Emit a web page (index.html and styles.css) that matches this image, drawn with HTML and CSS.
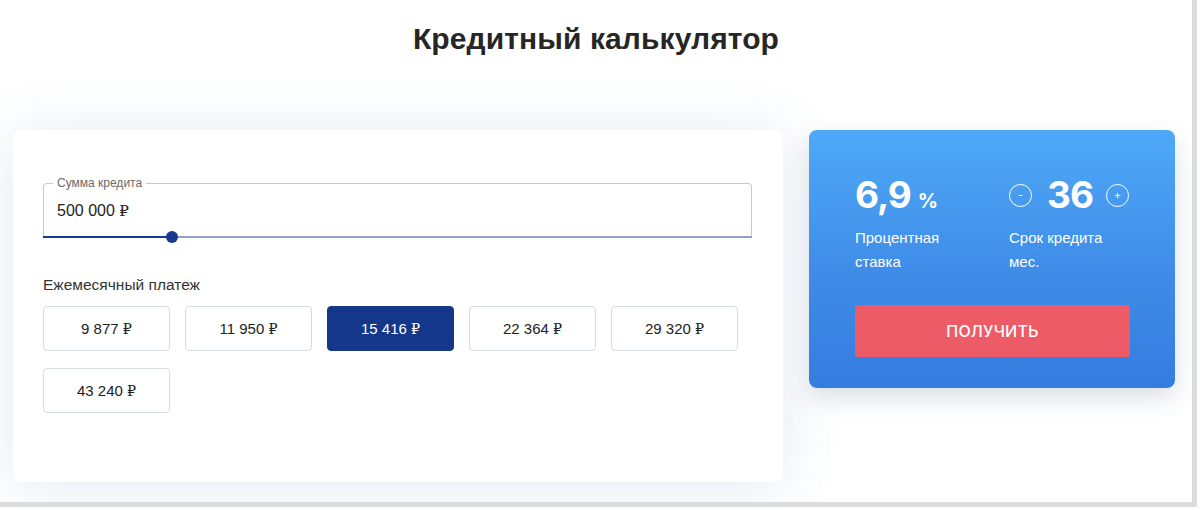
FILE: index.html
```html
<!DOCTYPE html>
<html lang="ru">
<head>
<meta charset="utf-8">
<title>Кредитный калькулятор</title>
<link rel="stylesheet" href="styles.css">
</head>
<body>
<div class="frame">
  <h1 class="title">Кредитный калькулятор</h1>
  <div class="row">
    <section class="card">
      <div class="field">
        <span class="field-label">Сумма кредита</span>
        <div class="field-value">500 000 <span class="rub">₽</span></div>
      </div>
      <div class="slider">
        <div class="slider-fill"></div>
        <div class="slider-thumb"></div>
      </div>
      <div class="pay-title">Ежемесячный платеж</div>
      <div class="pays">
        <button class="pay">9 877 <span class="rub">₽</span></button>
        <button class="pay">11 950 <span class="rub">₽</span></button>
        <button class="pay active">15 416 <span class="rub">₽</span></button>
        <button class="pay">22 364 <span class="rub">₽</span></button>
        <button class="pay">29 320 <span class="rub">₽</span></button>
        <button class="pay">43 240 <span class="rub">₽</span></button>
      </div>
    </section>
    <aside class="result">
      <div class="stats">
        <div class="stat stat-rate">
          <div class="stat-num">6,9<span class="pct">%</span></div>
          <div class="stat-label">Процентная<br>ставка</div>
        </div>
        <div class="stat stat-term">
          <div class="stat-num term">
            <span class="circle">-</span>
            <span class="term-val">36</span>
            <span class="circle">+</span>
          </div>
          <div class="stat-label">Срок кредита<br>мес.</div>
        </div>
      </div>
      <button class="get">ПОЛУЧИТЬ</button>
    </aside>
  </div>
</div>
</body>
</html>
```
FILE: styles.css
```css
* { box-sizing: border-box; }
html, body { margin: 0; padding: 0; background: #fff; }
body { font-family: "Liberation Sans", Arial, sans-serif; color: #222; }

.frame {
  width: 1197px;
  height: 507px;
  background: #fff;
  border-right: 5px solid #dcdcdc;
  border-bottom: 5px solid #dcdcdc;
  overflow: hidden;
}

.title {
  margin: 0;
  padding-top: 22px;
  height: 130px;
  text-align: center;
  font-size: 30px;
  font-weight: 700;
  color: #262626;
  letter-spacing: 0.1px;
}

.row {
  display: flex;
  gap: 26px;
  padding-left: 13px;
  align-items: flex-start;
}

.card {
  width: 770px;
  height: 352px;
  background: #fff;
  border-radius: 8px;
  box-shadow: 0 4px 60px rgba(70, 110, 170, 0.15);
  padding: 53px 30px 0 30px;
}

.field {
  position: relative;
  height: 53px;
  border: 1px solid #c8c8c8;
  border-bottom: 0;
  border-radius: 4px 4px 0 0;
  width: 709px;
}
.field-label {
  position: absolute;
  top: -8px;
  left: 9px;
  padding: 0 4px;
  background: #fff;
  font-size: 12px;
  line-height: 14px;
  color: #6b6b6b;
}
.field-value {
  padding: 17px 0 0 13px;
  font-size: 16px;
  line-height: 20px;
  color: #222;
}
.rub { font-family: "DejaVu Serif", "Liberation Serif", serif; font-size: 0.95em; }

.slider {
  position: relative;
  width: 709px;
  height: 2px;
  background: #8ea2c8;
}
.slider-fill {
  width: 129px;
  height: 2px;
  background: #183a8e;
}
.slider-thumb {
  position: absolute;
  left: 123px;
  top: -5px;
  width: 12px;
  height: 12px;
  border-radius: 50%;
  background: #183a8e;
}

.pay-title {
  margin-top: 38px;
  font-size: 15.5px;
  line-height: 18px;
  color: #333;
}

.pays {
  margin-top: 12px;
  display: flex;
  flex-wrap: wrap;
  column-gap: 15px;
  row-gap: 17px;
  width: 709px;
}
.pay {
  width: 127px;
  height: 45px;
  border: 1px solid #d6dce5;
  border-radius: 4px;
  background: #fff;
  font-family: "Liberation Sans", Arial, sans-serif;
  font-size: 15px;
  color: #222;
  padding: 0;
}
.pay.active {
  background: #14378c;
  border-color: #14378c;
  color: #fff;
}

.result {
  width: 366px;
  height: 258px;
  border-radius: 8px;
  background: linear-gradient(180deg, #4ea9f7 0%, #3f8ce8 55%, #357ce0 100%);
  box-shadow: 0 10px 24px rgba(30, 60, 100, 0.16);
  padding: 45px 45px 0 46px;
  color: #fff;
}
.stats {
  display: flex;
}
.stat { flex-shrink: 0; }
.stat-rate { width: 154px; }
.stat-term { width: 121px; }
.stat-num {
  height: 40px;
  font-family: Inter, "Liberation Sans", sans-serif;
  font-weight: 700;
  font-size: 37px;
  line-height: 40px;
  letter-spacing: -1px;
}
.pct { font-size: 20px; margin-left: 7px; letter-spacing: 0; }
.term {
  display: flex;
  align-items: center;
}
.circle {
  flex-shrink: 0;
  width: 23px;
  height: 23px;
  border: 1px solid #fff;
  border-radius: 50%;
  font-size: 11px;
  font-weight: 400;
  line-height: 20px;
  text-align: center;
  letter-spacing: 0;
}
.term-val { margin: 0 13px 0 15px; }
.stat-label {
  margin-top: 11px;
  font-size: 15px;
  line-height: 24px;
  color: #fff;
}

.get {
  display: block;
  margin-top: 31px;
  width: 275px;
  height: 52px;
  border: 0;
  border-radius: 3px;
  background: #ec5b66;
  color: #fff;
  font-family: Inter, "Liberation Sans", Arial, sans-serif;
  font-weight: 500;
  font-size: 16px;
  letter-spacing: 0.2px;
}
```
